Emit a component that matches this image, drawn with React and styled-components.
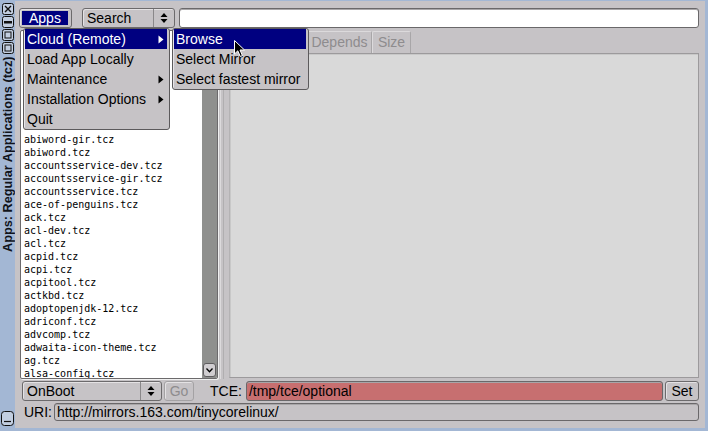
import React from 'react';
import styled, { createGlobalStyle } from 'styled-components';

const GlobalStyle = createGlobalStyle`
  html, body {
    margin: 0;
    padding: 0;
    background: #a3b7d4;
  }
`;

const packages = [
  '0ad-data.tcz', '0ad.tcz', '2048.tcz', '3dm.tcz', '9base.tcz', 'a52dec.tcz',
  'aalib.tcz', 'abiword-dev.tcz', 'abiword-gir.tcz', 'abiword.tcz',
  'accountsservice-dev.tcz', 'accountsservice-gir.tcz', 'accountsservice.tcz',
  'ace-of-penguins.tcz', 'ack.tcz', 'acl-dev.tcz', 'acl.tcz', 'acpid.tcz',
  'acpi.tcz', 'acpitool.tcz', 'actkbd.tcz', 'adoptopenjdk-12.tcz',
  'adriconf.tcz', 'advcomp.tcz', 'adwaita-icon-theme.tcz', 'ag.tcz',
  'alsa-config.tcz', 'alsa-dev.tcz',
];

const mainMenu = [
  { label: 'Cloud (Remote)', sub: true, active: true },
  { label: 'Load App Locally' },
  { label: 'Maintenance', sub: true },
  { label: 'Installation Options', sub: true },
  { label: 'Quit' },
];

const cloudMenu = [
  { label: 'Browse', active: true },
  { label: 'Select Mirror' },
  { label: 'Select fastest mirror' },
];

const tabs = [
  { label: 'Info', width: 36 },
  { label: 'Files', width: 42 },
  { label: 'Depends', width: 65 },
  { label: 'Size', width: 39 },
];

// window frame

const Root = styled.div`
  position: relative;
  display: flex;
  width: 708px;
  height: 431px;
  background: #a3b7d4;
  overflow: hidden;
  font-family: "Liberation Sans", Arial, sans-serif;
  font-size: 14px;
  color: #000;
`;

const TitleBar = styled.div`
  width: 15px;
  display: flex;
  flex-direction: column;
  align-items: center;
  padding-top: 3px;
  gap: 1px;
`;

const FrameButton = styled.svg`
  display: block;
  width: 12px;
  height: 12px;
`;

const TitleText = styled.div`
  margin-top: 1px;
  margin-left: 1px;
  height: 196px;
  writing-mode: vertical-rl;
  transform: rotate(180deg);
  font-weight: bold;
  font-size: 12.7px;
  line-height: 13px;
  color: #10131a;
  white-space: nowrap;
`;

const Spacer = styled.div`
  flex: 1;
`;

const BottomButton = styled.svg`
  display: block;
  width: 13px;
  height: 15px;
  margin-bottom: 5px;
`;

const Main = styled.div`
  flex: 1;
  margin: 1px 3px 3px 0;
  padding: 7px 6px 0 4px;
  background: #c6c3c6;
  display: flex;
  flex-direction: column;
`;

// rows

const Row = styled.div`
  display: flex;
  align-items: stretch;
  height: ${(p) => p.h || 20}px;
  margin-top: ${(p) => p.mt || 0}px;
`;

const MenuButton = styled.div`
  box-sizing: border-box;
  width: 53px;
  margin-right: 10px;
  padding: 2px;
  border: 1px solid #6c6a6c;
  border-radius: 3px;
  box-shadow: inset 1px 1px 0 #e4e2e4;
  display: flex;
`;

const MenuLabel = styled.div`
  flex: 1;
  background: #000080;
  color: #fff;
  padding-left: 7px;
  line-height: 15px;
  margin-right: 1px;
`;

const Choice = styled.div`
  box-sizing: border-box;
  width: ${(p) => p.w}px;
  margin-left: ${(p) => p.ml || 0}px;
  margin-right: ${(p) => p.mr || 0}px;
  border: 1px solid #6c6a6c;
  border-radius: 3px;
  box-shadow: inset 1px 1px 0 #e4e2e4;
  display: flex;
  align-items: stretch;
`;

const ChoiceText = styled.div`
  flex: 1;
  padding-left: 4px;
  line-height: 18px;
`;

const ChoiceArrows = styled.div`
  width: 20px;
  border-left: 1px solid #8a888a;
  display: flex;
  align-items: center;
  justify-content: center;
`;

const Input = styled.div`
  box-sizing: border-box;
  flex: 1;
  margin-left: ${(p) => p.ml || 0}px;
  border: 1px solid #6a686a;
  border-radius: 3px;
  background: ${(p) => p.bg || '#fff'};
  box-shadow: inset 0 1px 0 #a8a6a8;
  padding-left: 2px;
  line-height: ${(p) => p.lh || 18}px;
  white-space: nowrap;
  overflow: hidden;
`;

const Button = styled.div`
  box-sizing: border-box;
  width: ${(p) => p.w}px;
  margin-left: ${(p) => p.ml || 0}px;
  border: 1px solid ${(p) => (p.disabled ? '#a4a2a4' : '#6c6a6c')};
  border-radius: 3px;
  box-shadow: inset 1px 1px 0 #e4e2e4;
  color: ${(p) => (p.disabled ? '#8e8c8e' : '#000')};
  text-align: center;
  line-height: 18px;
`;

const Label = styled.div`
  margin-left: ${(p) => p.ml || 0}px;
  margin-right: ${(p) => p.mr || 0}px;
  line-height: ${(p) => p.lh || 20}px;
  white-space: nowrap;
`;

// list + tabs

const ListBox = styled.div`
  box-sizing: border-box;
  width: 198px;
  margin-left: 1px;
  border: 1px solid #6c6a6c;
  border-radius: 2px;
  box-shadow: 1px 1px 0 #f0f0f0;
  background: #fff;
  display: flex;
  overflow: hidden;
`;

const ListItems = styled.div`
  flex: 1;
  margin-top: -2px;
  padding-left: 3px;
  font-family: "DejaVu Sans Mono", "Liberation Mono", monospace;
  font-size: 10px;
  line-height: 13px;
  white-space: nowrap;
  overflow: hidden;
`;

const ScrollBar = styled.div`
  width: 15px;
  background: #8f908e;
  display: flex;
  flex-direction: column;
  align-items: center;
`;

const ScrollButton = styled.div`
  box-sizing: border-box;
  width: 13px;
  height: 14px;
  margin: 1px 0;
  border: 1px solid #5e5c5e;
  border-radius: 3px;
  background: #d0cdd0;
  display: flex;
  align-items: center;
  justify-content: center;
`;

const ScrollThumb = styled.div`
  box-sizing: border-box;
  width: 13px;
  height: 18px;
  border: 1px solid #5e5c5e;
  border-radius: 3px;
  background: #c6c3c6;
`;

const Divider = styled.div`
  width: 11px;
  display: flex;
  justify-content: center;
  &::before {
    content: '';
    width: 2px;
    margin-right: 3px;
    border-left: 1px solid #dcdadc;
    border-right: 1px solid #b0aeb0;
  }
`;

const TabArea = styled.div`
  flex: 1;
  display: flex;
  flex-direction: column;
`;

const TabStrip = styled.div`
  height: 23px;
  display: flex;
  align-items: flex-end;
`;

const Tab = styled.div`
  box-sizing: border-box;
  width: ${(p) => p.w}px;
  height: 22px;
  border-top: 1px solid #dcdadc;
  border-left: 1px solid #dcdadc;
  border-right: 1px solid #a8a6a8;
  border-radius: 2px 2px 0 0;
  color: #8e8c8e;
  text-align: center;
  line-height: 21px;
`;

const TabPanel = styled.div`
  flex: 1;
  margin-bottom: 1px;
  border: 1px solid #9c9a9c;
  border-left-color: #b4b2b4;
  box-shadow: inset 1px 1px 0 #c8c8c8;
  background: #d9d9d9;
`;

// popup menus

const Popup = styled.div`
  position: absolute;
  left: ${(p) => p.x}px;
  top: ${(p) => p.y}px;
  width: ${(p) => p.w}px;
  box-sizing: border-box;
  padding: 0 2px 0 1px;
  border: 1px solid #5c5a5c;
  border-radius: 3px;
  background: #c6c3c6;
  box-shadow: inset 1px 1px 0 #e8e6e8;
`;

const MenuItem = styled.div`
  height: 20px;
  display: flex;
  align-items: center;
  justify-content: space-between;
  padding: 0 3px 0 2px;
  background: ${(p) => (p.active ? '#000080' : 'transparent')};
  color: ${(p) => (p.active ? '#fff' : '#000')};
  white-space: nowrap;
`;

const Cursor = styled.svg`
  position: absolute;
  left: 234px;
  top: 40px;
  width: 12px;
  height: 18px;
`;

function UpDown() {
  return (
    <svg width="8" height="12" viewBox="0 0 8 12">
      <path d="M4 1 L7.5 5 L0.5 5 Z" fill="#000" />
      <path d="M0.5 7 L7.5 7 L4 11 Z" fill="#000" />
    </svg>
  );
}

function SubArrow({ color }) {
  return (
    <svg width="6" height="9" viewBox="0 0 6 9">
      <path d="M0.5 0.5 L5.5 4.5 L0.5 8.5 Z" fill={color} />
    </svg>
  );
}

function FrameIcon({ kind }) {
  return (
    <FrameButton viewBox="0 0 12 12">
      <rect x="0.5" y="0.5" width="11" height="11" rx="2" fill="#c2cee0" stroke="#111" />
      {kind === 'close' && <path d="M3 3 L9 9 M9 3 L3 9" stroke="#111" strokeWidth="1.4" />}
      {kind === 'min' && <rect x="2" y="5" width="8" height="2.5" fill="#111" />}
      {kind === 'max' && <rect x="3" y="3" width="6" height="6" fill="none" stroke="#111" />}
    </FrameButton>
  );
}

export default function App() {
  return (
    <>
      <GlobalStyle />
      <Root>
        <TitleBar>
          <FrameIcon kind="close" />
          <FrameIcon kind="min" />
          <FrameIcon kind="max" />
          <FrameIcon kind="max" />
          <TitleText>Apps: Regular Applications (tcz)</TitleText>
          <Spacer />
          <BottomButton viewBox="0 0 13 15">
            <rect x="0.5" y="0.5" width="12" height="14" rx="3" fill="#c2cee0" stroke="#111" />
            <path d="M3 10.5 H10" stroke="#111" strokeWidth="1.2" />
          </BottomButton>
        </TitleBar>

        <Main>
          <Row>
            <MenuButton>
              <MenuLabel>Apps</MenuLabel>
            </MenuButton>
            <Choice w={93} mr={4}>
              <ChoiceText>Search</ChoiceText>
              <ChoiceArrows>
                <UpDown />
              </ChoiceArrows>
            </Choice>
            <Input />
          </Row>

          <Row h={349} mt={2}>
            <ListBox>
              <ListItems>
                {packages.map((p) => (
                  <div key={p}>{p}</div>
                ))}
              </ListItems>
              <ScrollBar>
                <ScrollButton />
                <ScrollThumb />
                <Spacer />
                <ScrollButton>
                  <svg width="7" height="5" viewBox="0 0 7 5">
                    <path d="M0.5 0.5 L3.5 3.8 L6.5 0.5" fill="none" stroke="#000" strokeWidth="1.3" />
                  </svg>
                </ScrollButton>
              </ScrollBar>
            </ListBox>
            <Divider />
            <TabArea>
              <TabStrip>
                {tabs.map((t) => (
                  <Tab key={t.label} w={t.width}>
                    {t.label}
                  </Tab>
                ))}
              </TabStrip>
              <TabPanel />
            </TabArea>
          </Row>

          <Row mt={2}>
            <Choice w={140} ml={3} mr={2}>
              <ChoiceText>OnBoot</ChoiceText>
              <ChoiceArrows>
                <UpDown />
              </ChoiceArrows>
            </Choice>
            <Button w={30} disabled>
              Go
            </Button>
            <Label ml={16} mr={4}>
              TCE:
            </Label>
            <Input bg="#c76f70">/tmp/tce/optional</Input>
            <Button w={34} ml={2}>
              Set
            </Button>
          </Row>

          <Row h={18} mt={2}>
            <Label ml={5} lh={18}>
              URI:
            </Label>
            <Input ml={2} bg="#c6c3c6" lh={16}>
              http://mirrors.163.com/tinycorelinux/
            </Input>
          </Row>
        </Main>

        <Popup x={23} y={28} w={147}>
          {mainMenu.map((m) => (
            <MenuItem key={m.label} active={m.active}>
              <span>{m.label}</span>
              {m.sub && <SubArrow color={m.active ? '#fff' : '#000'} />}
            </MenuItem>
          ))}
        </Popup>

        <Popup x={172} y={28} w={137}>
          {cloudMenu.map((m) => (
            <MenuItem key={m.label} active={m.active}>
              <span>{m.label}</span>
            </MenuItem>
          ))}
        </Popup>

        <Cursor viewBox="0 0 12 18">
          <path d="M0.5 0.5 L0.5 14 L3.8 10.8 L6.3 16.5 L8.4 15.6 L6 10 L10.5 10 Z" fill="#000" stroke="#fff" strokeWidth="1" />
        </Cursor>
      </Root>
    </>
  );
}
